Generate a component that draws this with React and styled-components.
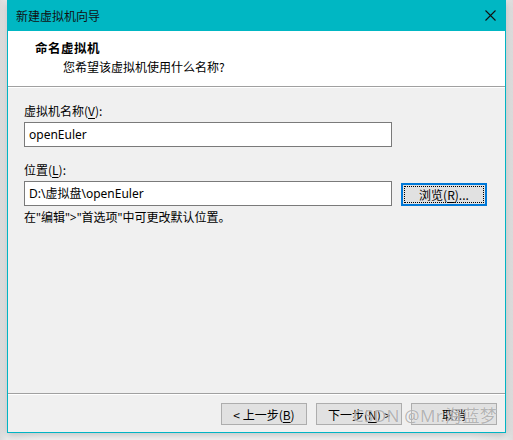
import React from 'react';
import styled, { createGlobalStyle } from 'styled-components';

const GlobalStyle = createGlobalStyle`
  html, body {
    margin: 0;
    padding: 0;
    background: #f3f3f3;
  }
  body {
    font-family: "Noto Sans", "Noto Sans CJK SC", sans-serif;
    font-size: 12px;
    color: #000;
  }
`;

const Page = styled.div`
  width: 513px;
  height: 440px;
  position: relative;
  overflow: hidden;
  background: linear-gradient(90deg, #dcdcdc 0, #ececec 7px, #f3f3f3 40px, #f3f3f3 470px, #e8e8e8 506px, #dcdcdc 513px);
`;

const Window = styled.div`
  margin-left: 7px;
  width: 497px;
  height: 432px;
  border: 1px solid #00b4c4;
  border-top: none;
  background: #f0f0f0;
  display: flex;
  flex-direction: column;
  box-shadow: 0 2px 8px rgba(0, 0, 0, 0.22);
`;

const TitleBar = styled.div`
  height: 31px;
  background: #00b7c3;
  display: flex;
  align-items: center;
  justify-content: space-between;
  padding: 0 9px 0 8px;
  font-family: "Noto Sans CJK SC", sans-serif;
  font-size: 12px;
  color: #111;
`;

const CloseIcon = styled.svg`
  width: 11px;
  height: 11px;
  display: block;
`;

const Header = styled.div`
  height: 56px;
  background: #fff;
  border-bottom: 1px solid #a0a0a0;
  box-shadow: 0 1px 0 #ffffff;
  padding: 9px 0 0 27px;
  box-sizing: border-box;
  font-family: "Noto Sans CJK SC", sans-serif;
`;

const HeaderTitle = styled.div`
  font-weight: 700;
  font-size: 12.5px;
  line-height: 16px;
  letter-spacing: 0.5px;
`;

const HeaderSub = styled.div`
  margin-left: 28px;
  margin-top: 3px;
  font-size: 12px;
  line-height: 16px;
`;

const Body = styled.div`
  flex: 1;
  padding: 15px 0 0 16px;
  margin-top: 1px;
`;

const Label = styled.div`
  font-family: "Noto Sans CJK SC", sans-serif;
  font-size: 12px;
  line-height: 16px;
  margin-top: ${p => p.$top || 0}px;
`;

const U = styled.span`
  text-decoration: underline;
  text-underline-offset: 2px;
`;

const Row = styled.div`
  display: flex;
  align-items: flex-end;
  gap: 9px;
  margin-top: 2.5px;
`;

const TextBox = styled.div`
  width: 368px;
  height: 25px;
  box-sizing: border-box;
  border: 1px solid #7a7a7a;
  background: #fff;
  display: flex;
  align-items: center;
  padding-left: 4px;
  font-family: "Noto Sans", "Noto Sans CJK SC", sans-serif;
  font-size: 12px;
`;

const Button = styled.div`
  width: ${p => p.$w || 86}px;
  height: ${p => p.$h || 22}px;
  box-sizing: border-box;
  background: #e1e1e1;
  border: ${p => (p.$focused ? '2px solid #0078d7' : '1px solid #adadad')};
  display: flex;
  align-items: center;
  justify-content: center;
  font-family: "Noto Sans CJK SC", sans-serif;
  font-size: 12px;
  position: relative;

  &::after {
    content: '';
    display: ${p => (p.$focused ? 'block' : 'none')};
    position: absolute;
    inset: 1px;
    border: 1px dotted #000;
  }
`;

const Note = styled.div`
  margin-top: 4.5px;
  font-family: "Noto Sans", "Noto Sans CJK SC", sans-serif;
  font-size: 12px;
  line-height: 16px;
`;

const Footer = styled.div`
  height: 39px;
  border-top: 1px solid #a0a0a0;
  box-shadow: inset 0 1px 0 #ffffff;
  display: flex;
  justify-content: flex-end;
  gap: 9px;
  padding: 9px 8px 0 0;
  box-sizing: border-box;
`;

const Watermark = styled.div`
  position: absolute;
  z-index: 2;
  left: 353px;
  top: 402px;
  font-family: "Noto Sans", "Noto Sans CJK SC", sans-serif;
  font-size: 17px;
  letter-spacing: 0.3px;
  color: rgba(150, 150, 150, 0.7);
  text-shadow: 0 0 1px rgba(255, 255, 255, 0.9);
  white-space: nowrap;
  pointer-events: none;
`;

export default function App() {
  return (
    <>
      <GlobalStyle />
      <Page>
        <Window>
          <TitleBar>
            <span>新建虚拟机向导</span>
            <CloseIcon viewBox="0 0 11 11">
              <path d="M0.5 0.5 L10.5 10.5 M10.5 0.5 L0.5 10.5" stroke="#111" strokeWidth="1.1" />
            </CloseIcon>
          </TitleBar>
          <Header>
            <HeaderTitle>命名虚拟机</HeaderTitle>
            <HeaderSub>您希望该虚拟机使用什么名称?</HeaderSub>
          </Header>
          <Body>
            <Label>虚拟机名称(<U>V</U>):</Label>
            <Row>
              <TextBox>openEuler</TextBox>
            </Row>
            <Label $top={15.5}>位置(<U>L</U>):</Label>
            <Row>
              <TextBox>D:\虚拟盘\openEuler</TextBox>
              <Button $focused $h={23}>浏览(<U>R</U>)...</Button>
            </Row>
            <Note>在"编辑"&gt;"首选项"中可更改默认位置。</Note>
          </Body>
          <Footer>
            <Button>&lt; 上一步(<U>B</U>)</Button>
            <Button>下一步(<U>N</U>) &gt;</Button>
            <Button>取消</Button>
          </Footer>
        </Window>
        <Watermark>CSDN @Mr.海蓝梦</Watermark>
      </Page>
    </>
  );
}
